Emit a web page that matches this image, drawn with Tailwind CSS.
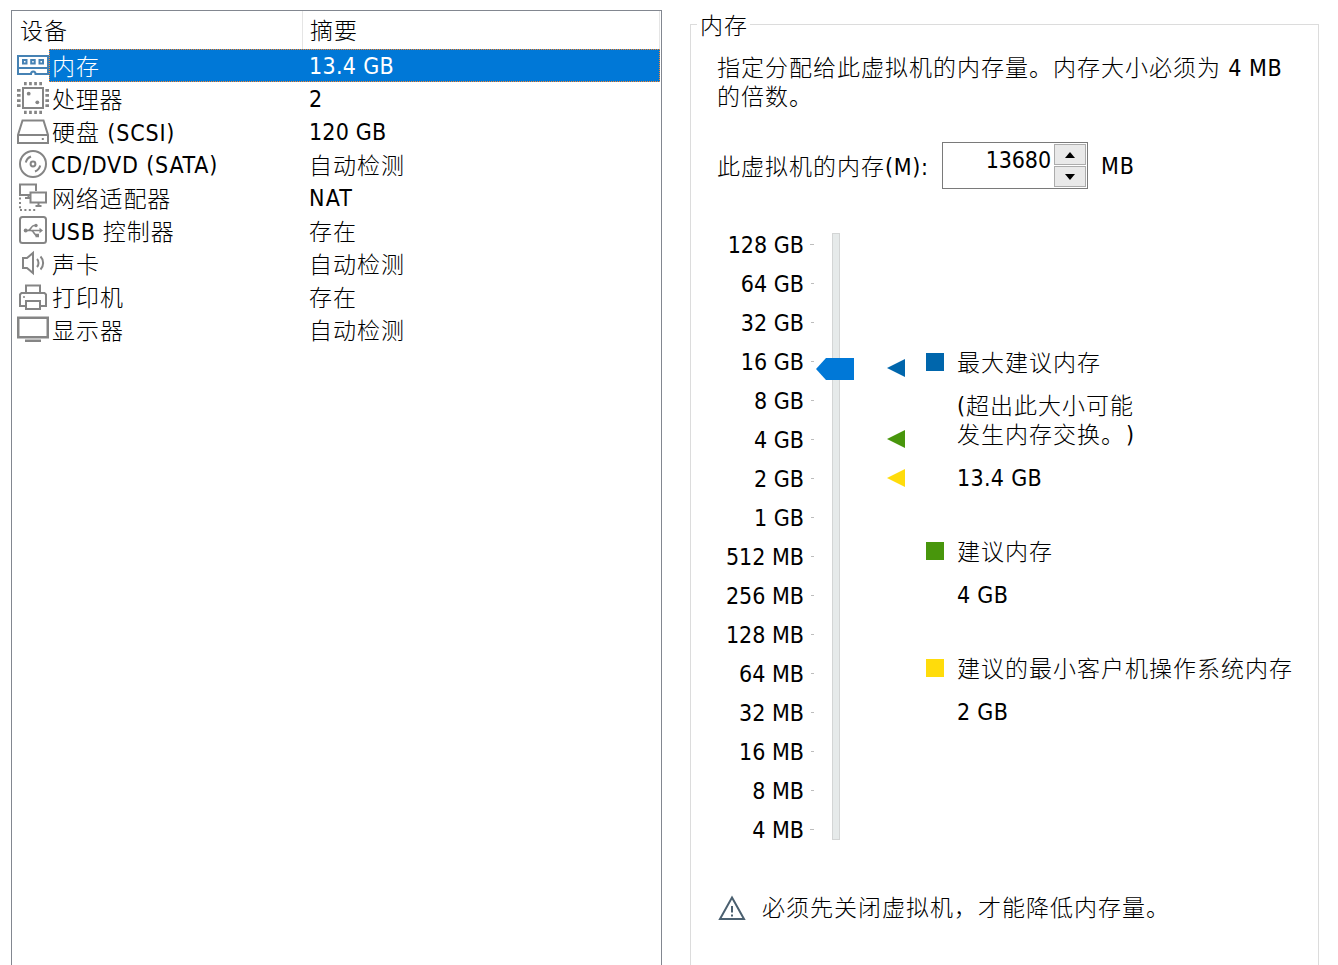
<!DOCTYPE html>
<html lang="zh-CN">
<head>
<meta charset="utf-8">
<title>虚拟机设置</title>
<script src="https://cdn.jsdelivr.net/npm/@tailwindcss/browser@4"></script>
</head>
<body class="h-[965px] w-[1338px] overflow-hidden bg-white font-['Noto_Sans_CJK_SC',sans-serif] text-[23px] font-light tracking-[1px] text-black [text-spacing-trim:space-all]">
<main class="flex h-[965px] pl-[11px]">

  <section class="mt-[10px] flex h-[970px] w-[651px] flex-col border border-[#828790] pr-px">
    <div class="flex h-[38px] leading-[36px]">
      <div class="w-[291px] border-r border-[#e5e5e5] pl-[8px]">设备</div>
      <div class="flex-1 border-r border-[#e5e5e5] pl-[7px]">摘要</div>
    </div>
    <ul class="leading-[32px]">
      <li class="flex h-[33px] pl-[5px]">
        <svg class="h-[33px] w-8 shrink-0" viewBox="0 0 32 33" fill="none" stroke="#4682b4" stroke-width="2"><path d="M1 7h30v12H1zM1 19v6h13c0-3.500 4.500-3.500 4.500 0H31v-6"/><path d="M6 11h3.500v3.500H6zM14.200 11h3.500v3.500h-3.500zM22.500 11H26v3.500h-3.500z"/></svg>
        <div class="flex flex-1 border border-dotted border-[#ff8728] bg-[#0078d7] leading-[30px] text-white"><div class="w-[259px] pl-[2px]">内存</div><div class="font-['DejaVu_Sans_Condensed','DejaVu_Sans'] font-normal leading-[33px] tracking-[0.3px]">13.4 GB</div></div>
      </li>
      <li class="flex h-[33px] pl-[5px]">
        <svg class="h-[33px] w-8 shrink-0" viewBox="0 0 32 33" fill="none" stroke="#858585" stroke-width="2"><path d="M6 6h20v20H6z"/><path stroke-width="3.300" stroke-dasharray="2.700 2.400" d="M7 1.700h18M7 30.300h18"/><path stroke-width="3.600" stroke-dasharray="2.700 2.400" d="M1.800 7v18M30.200 7v18"/><g fill="#858585" stroke="none"><circle cx="11.700" cy="11.700" r="1.900"/><circle cx="20.300" cy="20.300" r="1.900"/></g></svg>
        <div class="w-[260px] pl-[3px] tracking-[0.7px]">处理器</div><div class="font-['DejaVu_Sans_Condensed','DejaVu_Sans'] font-normal leading-[35px] tracking-[0.2px]">2</div>
      </li>
      <li class="flex h-[33px] pl-[5px]">
        <svg class="h-[33px] w-8 shrink-0" viewBox="0 0 32 33" fill="none" stroke="#858585" stroke-width="2"><path d="M5.500 5.500h21L31 20v8H1v-8zM1 20h30"/><path d="M24.800 24h2"/></svg>
        <div class="w-[260px] pl-[3px]">硬盘<span class="font-['DejaVu_Sans_Condensed','DejaVu_Sans'] font-normal leading-none tracking-[0.8px]"> (SCSI)</span></div><div class="font-['DejaVu_Sans_Condensed','DejaVu_Sans'] font-normal leading-[35px] tracking-[0.2px]">120 GB</div>
      </li>
      <li class="flex h-[33px] pl-[5px]">
        <svg class="h-[33px] w-8 shrink-0" viewBox="0 0 32 33" fill="none" stroke="#858585" stroke-width="2"><circle cx="16" cy="16" r="13"/><circle cx="16" cy="16" r="2.400"/><path d="M8.800 14.500C9.500 11.500 11.500 9.500 14 8.500M23.200 17.500c-.7 3-2.700 5-5.200 6"/></svg>
        <div class="w-[260px] pl-[2px] font-['DejaVu_Sans_Condensed','DejaVu_Sans'] font-normal leading-[35px] tracking-[0.8px]">CD/DVD (SATA)</div><div>自动检测</div>
      </li>
      <li class="flex h-[33px] pl-[5px]">
        <svg class="h-[33px] w-8 shrink-0" viewBox="0 0 32 33" fill="none" stroke="#858585" stroke-width="2"><path d="M13 14H3V3.500h16V10M8 17h5M11.500 14v3"/><path d="M13.500 11.500H29V21.500H13.500zM21.500 21.500V25M18.500 25h6"/><path stroke-dasharray="2 2.400" d="M3 16.500V28.500M3 29h17"/></svg>
        <div class="w-[260px] pl-[3px] tracking-[0.8px]">网络适配器</div><div class="font-['DejaVu_Sans_Condensed','DejaVu_Sans'] font-normal leading-[35px] tracking-[1.2px]">NAT</div>
      </li>
      <li class="flex h-[33px] pl-[5px]">
        <svg class="h-[33px] w-8 shrink-0" viewBox="0 0 32 33" fill="none" stroke="#858585" stroke-width="2"><rect x="3" y="3" width="26" height="26" rx="2.500"/><g stroke-width="1.500"><path d="M8 16.500h16M11 16.500c3 0 3-5 6-5h2M14 16.500c3 0 3 5 6 5"/></g><g fill="#858585" stroke="none"><circle cx="8.700" cy="16.500" r="2"/><circle cx="19" cy="11.500" r="1.700"/><path d="M22.500 13.700l3.500 2.800-3.500 2.800zM18.500 19.800H22v3.500h-3.500z"/></g></svg>
        <div class="w-[260px] pl-[2px]"><span class="font-['DejaVu_Sans_Condensed','DejaVu_Sans'] font-normal leading-none tracking-[0.7px]">USB </span>控制器</div><div>存在</div>
      </li>
      <li class="flex h-[33px] pl-[5px]">
        <svg class="h-[33px] w-8 shrink-0" viewBox="0 0 32 33" fill="none" stroke="#858585" stroke-width="2"><path d="M6 11h4l6-5v20l-6-5H6zM20 12c2 2 2 6 0 8M23.500 9.500c3.500 3.500 3.500 9.500 0 13"/></svg>
        <div class="w-[260px] pl-[3px]">声卡</div><div>自动检测</div>
      </li>
      <li class="flex h-[33px] pl-[5px]">
        <svg class="h-[33px] w-8 shrink-0" viewBox="0 0 32 33" fill="none" stroke="#858585" stroke-width="2"><path d="M9 13V5.500h14V13M9 26H3V14.500L4.500 13h23l1.500 1.500V26h-6M9 21h14v8H9z"/><path stroke-width="1.500" d="M6 17h2"/></svg>
        <div class="w-[260px] pl-[3px]">打印机</div><div>存在</div>
      </li>
      <li class="flex h-[33px] pl-[5px]">
        <svg class="h-[33px] w-8 shrink-0" viewBox="0 0 32 33" fill="none" stroke="#858585" stroke-width="2.500"><path d="M1.250 4.750h29.500v19.500H1.250zM8 27.700h16"/></svg>
        <div class="w-[260px] pl-[3px]">显示器</div><div>自动检测</div>
      </li>
    </ul>
  </section>

  <section class="relative mt-[24px] ml-[28px] h-[960px] w-[629px] border border-[#dcdcdc] pl-[25px]">
    <h2 class="absolute -top-[18px] left-[6px] w-[53px] bg-white pl-[3px] leading-[34px]">内存</h2>
    <p class="mt-[27px] pl-px leading-[29px]">指定分配给此虚拟机的内存量。内存大小必须为<span class="font-['DejaVu_Sans_Condensed','DejaVu_Sans'] font-normal leading-none tracking-[0.6px]"> 4 MB</span><br>的倍数。</p>

    <div class="mt-[32px] flex h-[47px]">
      <label class="w-[226px] pl-px leading-[46px]">此虚拟机的内存<span class="font-['DejaVu_Sans_Condensed','DejaVu_Sans'] font-normal leading-none tracking-[0.7px]">(M):</span></label>
      <div class="flex w-[146px] border border-[#7a7a7a]">
        <div class="flex-1 pr-[3px] text-right font-['DejaVu_Sans_Condensed','DejaVu_Sans'] font-normal leading-[35px] tracking-[-0.1px]">13680</div>
        <div class="flex w-[33px] flex-col gap-px py-px pr-px">
          <div class="flex flex-1 items-center justify-center border border-[#acacac] bg-[#e9e9e9]"><svg class="h-[6px] w-[10px]" viewBox="0 0 10 6"><path d="M0 6L5 0l5 6z"/></svg></div>
          <div class="flex flex-1 items-center justify-center border border-[#acacac] bg-[#e9e9e9]"><svg class="h-[6px] w-[10px]" viewBox="0 0 10 6"><path d="M0 0l5 6 5-6z"/></svg></div>
        </div>
      </div>
      <div class="pl-[13px] font-['DejaVu_Sans_Condensed','DejaVu_Sans'] font-normal leading-[48px] tracking-[0.8px]">MB</div>
    </div>

    <div class="mt-[36px] flex h-[624px]">
      <ul id="scale" class="w-[98px] font-['DejaVu_Sans_Condensed','DejaVu_Sans'] font-normal leading-[39px] tracking-[0px]"></ul>
      <div class="relative mt-[8px] ml-[18px] h-[607px] w-[8px] border border-[#d3d5d5] bg-[#e6eaea]">
        <svg class="absolute top-[124px] -left-[17px] h-[22px] w-[38px]" viewBox="0 0 38 22"><path fill="#0078d7" d="M0 11L10 0h28v22H10z"/></svg>
        <svg class="absolute top-[125px] left-[54px] h-[18px] w-[18px]" viewBox="0 0 18 18"><path fill="#0066ac" d="M0 9L18 0v18z"/></svg>
        <svg class="absolute top-[196px] left-[54px] h-[18px] w-[18px]" viewBox="0 0 18 18"><path fill="#48960c" d="M0 9L18 0v18z"/></svg>
        <svg class="absolute top-[235px] left-[54px] h-[18px] w-[18px]" viewBox="0 0 18 18"><path fill="#ffdc0b" d="M0 9L18 0v18z"/></svg>
      </div>
      <div class="ml-[86px] flex flex-col pt-[124px] leading-[29px]">
        <div class="flex h-[189px] gap-[13px]"><i class="mt-[4px] h-[18px] w-[18px] shrink-0 bg-[#0066ac]"></i><div>
          <p class="-mt-[2px]">最大建议内存</p>
          <p class="mt-[14px]"><span class="font-['DejaVu_Sans_Condensed','DejaVu_Sans'] font-normal leading-none">(</span>超出此大小可能<br><span>发生内存交换。</span><span class="pl-px font-['DejaVu_Sans_Condensed','DejaVu_Sans'] font-normal leading-none">)</span></p>
          <p class="mt-[16px] font-['DejaVu_Sans_Condensed','DejaVu_Sans'] font-normal tracking-[0.3px]">13.4 GB</p>
        </div></div>
        <div class="flex h-[117px] gap-[13px]"><i class="mt-[4px] h-[18px] w-[18px] shrink-0 bg-[#48960c]"></i><div>
          <p class="-mt-[2px]">建议内存</p>
          <p class="mt-[16px] font-['DejaVu_Sans_Condensed','DejaVu_Sans'] font-normal tracking-[0.3px]">4 GB</p>
        </div></div>
        <div class="flex gap-[13px]"><i class="mt-[4px] h-[18px] w-[18px] shrink-0 bg-[#ffdc0b]"></i><div>
          <p class="-mt-[2px] whitespace-nowrap">建议的最小客户机操作系统内存</p>
          <p class="mt-[16px] font-['DejaVu_Sans_Condensed','DejaVu_Sans'] font-normal tracking-[0.3px]">2 GB</p>
        </div></div>
      </div>
    </div>

    <div class="mt-[42px] flex items-center pl-[2px]">
      <svg class="h-[26px] w-[28px]" viewBox="0 0 28 26" fill="none" stroke="#4b6070" stroke-width="2"><path d="M14 2.500L26 24H2z"/><path d="M14 11v6.500M14 19.500v2"/></svg>
      <p class="pb-[4px] pl-[16px] leading-[30px]">必须先关闭虚拟机，才能降低内存量。</p>
    </div>
  </section>
</main>
<script>
  const labels = ['128 GB','64 GB','32 GB','16 GB','8 GB','4 GB','2 GB','1 GB','512 MB','256 MB','128 MB','64 MB','32 MB','16 MB','8 MB','4 MB'];
  document.getElementById('scale').innerHTML = labels.map((t, i) =>
    `<li class="flex h-[39px] items-center justify-end"><span class="whitespace-nowrap pt-px ${i % 15 ? 'pr-[7px]' : 'pr-[6px]'}">${t}</span><i class="h-px shrink-0 bg-[#bdbdbd] ${i % 15 ? 'w-[3px]' : 'w-[4px]'}"></i></li>`).join('');
</script>
</body>
</html>
